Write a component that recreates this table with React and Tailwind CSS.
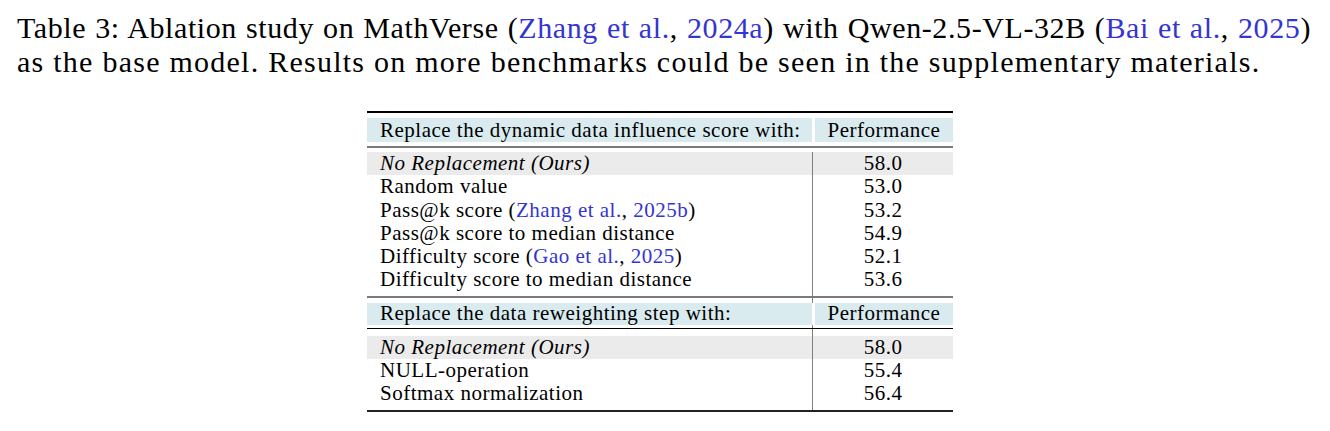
import React from 'react';

const cite = 'text-[#3535cf]';

const part1 = [
  { label: <i>No Replacement (Ours)</i>, value: '58.0', shade: true },
  { label: 'Random value', value: '53.0' },
  {
    label: (
      <>
        Pass@k score (<span className={cite}>Zhang et al.</span>,{'\u00a0'}<span className={cite}>2025b</span>)
      </>
    ),
    value: '53.2',
  },
  { label: 'Pass@k score to median distance', value: '54.9' },
  {
    label: (
      <>
        Difficulty score (<span className={cite}>Gao et al.</span>,{'\u00a0'}<span className={cite}>2025</span>)
      </>
    ),
    value: '52.1',
  },
  { label: 'Difficulty score to median distance', value: '53.6' },
];

const part2 = [
  { label: <i>No Replacement (Ours)</i>, value: '58.0', shade: true },
  { label: 'NULL-operation', value: '55.4' },
  { label: 'Softmax normalization', value: '56.4' },
];

function HeadRow({ title, h }) {
  return (
    <div className={`flex ${h}`}>
      <div className="w-[445px] bg-[#d9ebee] pl-[13px] flex items-center whitespace-nowrap">{title}</div>
      <div className="w-[3px]" />
      <div className="flex-1 bg-[#d9ebee] flex items-center justify-center">Performance</div>
    </div>
  );
}

function Row({ label, value, shade }) {
  return (
    <div className={`flex h-[23.25px] ${shade ? 'bg-[#ebebeb]' : ''}`}>
      <div className="w-[446px] pl-[13px] flex items-center border-r border-[#808080] whitespace-nowrap">
        {label}
      </div>
      <div className="flex-1 flex items-center justify-center">{value}</div>
    </div>
  );
}

function Spacer({ h }) {
  return (
    <div className={`flex ${h}`}>
      <div className="w-[446px] border-r border-[#808080]" />
    </div>
  );
}

export default function App() {
  return (
    <div className="w-[1330px] h-[431px] bg-white text-black overflow-hidden font-['Liberation_Serif',serif]">
      {/* caption */}
      <div className="pt-[11px] pl-[17px] w-[1311px] text-[30px] leading-[34px]">
        <div className="text-justify [text-align-last:justify] whitespace-nowrap tracking-[0.6px]">
          Table 3: Ablation study on MathVerse (<span className={cite}>Zhang et al.</span>,{' '}
          <span className={cite}>2024a</span>) with Qwen-2.5-VL-32B (<span className={cite}>Bai et al.</span>,{' '}
          <span className={cite}>2025</span>)
        </div>
        <div className="whitespace-nowrap tracking-[1.25px]">
          as the base model. Results on more benchmarks could be seen in the supplementary materials.
        </div>
      </div>

      {/* table */}
      <div className="ml-[367px] mt-[32px] w-[586px] text-[21px] leading-none tracking-[0.5px]">
        <div className="h-[2px] bg-black" />
        <div className="h-[5px]" />
        <HeadRow h="h-[24px]" title="Replace the dynamic data influence score with:" />
        <div className="h-[4px]" />
        <div className="h-[2px] bg-[#7a7a7a]" />
        <div className="h-[4px]" />
        {part1.map((r, i) => (
          <Row key={i} {...r} />
        ))}
        <Spacer h="h-[4px]" />
        <div className="h-[2px] bg-[#7a7a7a]" />
        <Spacer h="h-[5px]" />
        <HeadRow h="h-[22px]" title="Replace the data reweighting step with:" />
        <Spacer h="h-[3px]" />
        <div className="h-px bg-black" />
        <Spacer h="h-[7px]" />
        {part2.map((r, i) => (
          <Row key={i} {...r} />
        ))}
        <Spacer h="h-[5px]" />
        <div className="h-[2px] bg-[#222]" />
      </div>
    </div>
  );
}
